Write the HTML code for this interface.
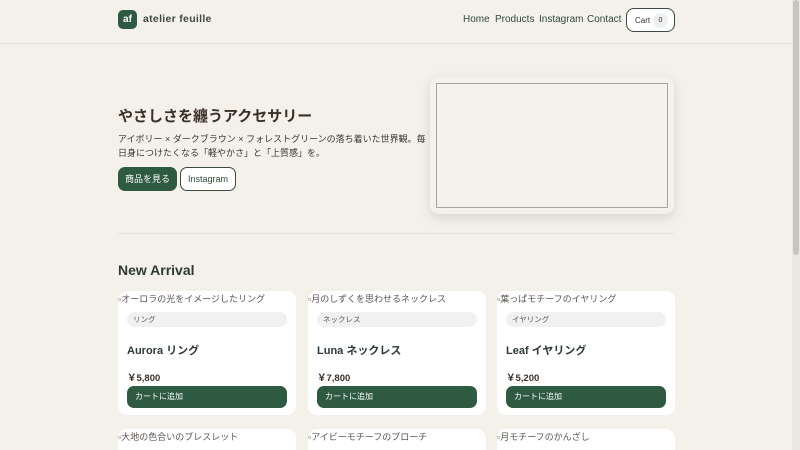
<!DOCTYPE html>
<html><head><meta charset="utf-8"><style>
*{box-sizing:border-box;margin:0;padding:0}
html,body{width:800px;height:450px;overflow:hidden}
body{background:#f4f1eb;font-family:"Liberation Sans","Noto Sans CJK JP",sans-serif;color:#3a3530;position:relative}
.hdr{height:44px;border-bottom:1px solid #e4e0d8;position:relative}
.logo{position:absolute;left:118px;top:10px;width:19px;height:19px;border-radius:5px;background:#2d5a40;color:#fff;font-size:10px;font-weight:bold;text-align:center;line-height:19px}
.brand{position:absolute;left:143px;top:13px;font-size:10.5px;font-weight:bold;color:#3c4a40;letter-spacing:.3px}
.nav span{position:absolute;top:14px;font-size:10px;color:#2f4a3a;white-space:nowrap}
.cart{position:absolute;left:626px;top:8px;width:49px;height:24px;border:1px solid #3d4a40;border-radius:8px;background:#fff;font-size:8px;color:#333}
.cart b{position:absolute;left:8px;top:7px;font-weight:normal}
.cart i{position:absolute;left:26px;top:4px;width:15px;height:15px;border-radius:8px;background:#eef0ee;font-style:normal;text-align:center;line-height:15px;font-size:7px}
h1{position:absolute;left:118px;top:105px;font-size:15px;font-weight:bold;color:#3a3028}
.desc{position:absolute;left:118px;top:133px;white-space:nowrap;font-size:9px;line-height:13.5px;color:#3a3530}
.b1{position:absolute;left:118px;top:167px;width:59px;height:24px;border-radius:7px;background:#2d5a40;color:#fff;font-size:9px;text-align:center;line-height:24px}
.b2{position:absolute;left:180px;top:167px;width:56px;height:24px;border-radius:7px;border:1px solid #3d4a40;background:#fff;color:#2f4a3a;font-size:9px;text-align:center;line-height:22px}
.img{position:absolute;left:430px;top:77px;width:244px;height:137px;border-radius:9px;background:#f4f1eb;box-shadow:0 4px 12px rgba(0,0,0,.12)}
.img div{position:absolute;left:6px;top:6px;width:232px;height:125px;border:1px solid #a8a49c}
.hr{position:absolute;left:118px;top:233px;width:556px;border-top:1px solid #e6e2da}
h2{position:absolute;left:118px;top:262px;font-size:14px;font-weight:bold;color:#2f3a30}
.card{position:absolute;width:178px;height:124px;border-radius:9px;background:#fff}
.alt{position:absolute;left:0;top:1px;font-size:9px;color:#5a5550;white-space:nowrap}
.tag{position:absolute;left:9px;top:21px;width:160px;height:15px;border-radius:8px;background:#f0f1f0;font-size:7.5px;line-height:15px;padding-left:6px;color:#555}
.nm{position:absolute;left:9px;top:51px;font-size:11px;font-weight:bold;color:#2f3a30}
.pr{position:absolute;left:9px;top:79px;font-size:9.5px;font-weight:bold;color:#3a3028}
.add{position:absolute;left:9px;top:95px;width:160px;height:22px;border-radius:7px;background:#2d5a40;color:#fff;font-size:8px;line-height:22px;padding-left:8px}
.sb{position:absolute;left:792px;top:0;width:8px;height:450px;background:#ebe8e2}
.sb div{position:absolute;left:1px;top:0;width:6px;height:255px;border-radius:3px;background:#c8c5c0}
</style></head><body>
<div class="hdr"><div class="logo">af</div><div class="brand">atelier feuille</div>
<div class="nav"><span style="left:463px">Home</span><span style="left:495px">Products</span><span style="left:539px">Instagram</span><span style="left:587px">Contact</span></div>
<div class="cart"><b>Cart</b><i>0</i></div></div>
<h1>やさしさを纏うアクセサリー</h1>
<div class="desc">アイボリー × ダークブラウン × フォレストグリーンの落ち着いた世界観。毎<br>日身につけたくなる「軽やかさ」と「上質感」を。</div>
<div class="b1">商品を見る</div><div class="b2">Instagram</div>
<div class="img"><div></div></div>
<div class="hr"></div>
<h2>New Arrival</h2>
<div class="card" style="left:118px;top:291px"><div class="alt">▫オーロラの光をイメージしたリング</div><div class="tag">リング</div><div class="nm">Aurora リング</div><div class="pr">￥5,800</div><div class="add">カートに追加</div></div>
<div class="card" style="left:308px;top:291px"><div class="alt">▫月のしずくを思わせるネックレス</div><div class="tag">ネックレス</div><div class="nm">Luna ネックレス</div><div class="pr">￥7,800</div><div class="add">カートに追加</div></div>
<div class="card" style="left:497px;top:291px"><div class="alt">▫葉っぱモチーフのイヤリング</div><div class="tag">イヤリング</div><div class="nm">Leaf イヤリング</div><div class="pr">￥5,200</div><div class="add">カートに追加</div></div>
<div class="card" style="left:118px;top:429px;height:40px"><div class="alt">▫大地の色合いのブレスレット</div></div>
<div class="card" style="left:308px;top:429px;height:40px"><div class="alt">▫アイビーモチーフのブローチ</div></div>
<div class="card" style="left:497px;top:429px;height:40px"><div class="alt">▫月モチーフのかんざし</div></div>
<div class="sb"><div></div></div>
</body></html>
